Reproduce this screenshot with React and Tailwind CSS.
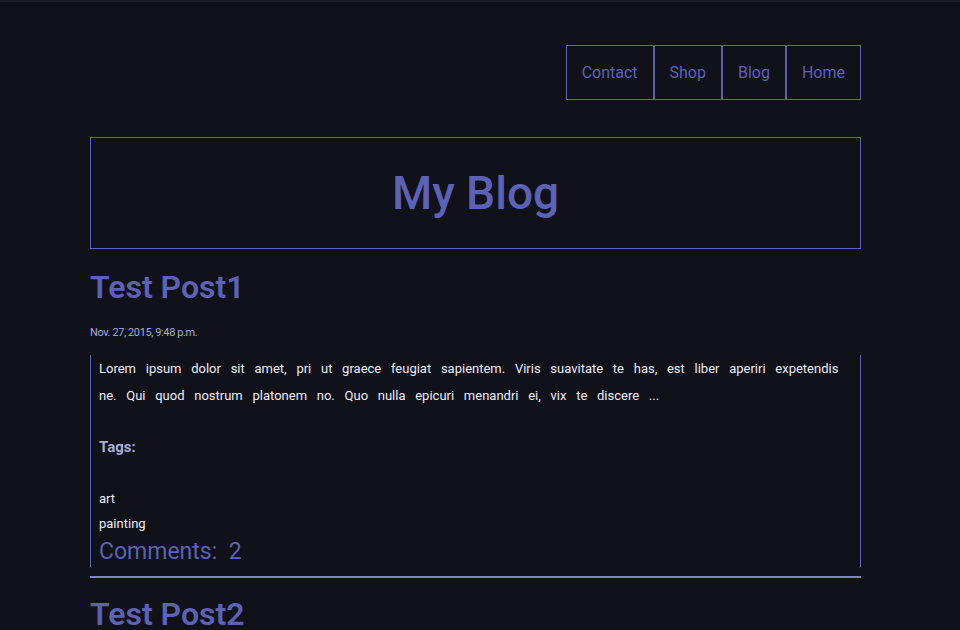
import React from 'react';

const navItems = ['Contact', 'Shop', 'Blog', 'Home'];

const posts = [
    {
        title: 'Test Post1',
        date: 'Nov. 27, 2015, 9:48 p.m.',
        body: 'Lorem ipsum dolor sit amet, pri ut graece feugiat sapientem. Viris suavitate te has, est liber aperiri expetendis ne. Qui quod nostrum platonem no. Quo nulla epicuri menandri ei, vix te discere ...',
        tags: ['art', 'painting'],
        comments: 2,
    },
];

const App = () => {
    return (
        <div
            className="min-h-screen h-[630px] overflow-hidden bg-[#11111a] border-t-2 border-[#1c1c25]"
            style={{ fontFamily: 'Roboto, "Liberation Sans", sans-serif' }}
        >
            <div className="ml-[90px] w-[771px]">
                <nav className="flex justify-end pt-[43px]">
                    {navItems.map((item) => (
                        <a
                            key={item}
                            href="#"
                            className="h-[55px] flex items-center px-[15px] border border-[#5c62b5] text-[16px] text-[#5c62b5]"
                        >
                            {item}
                        </a>
                    ))}
                </nav>

                <header className="mt-[37px] h-[112px] border border-[#5c62b5] flex items-center justify-center">
                    <h1 className="text-[46px] font-medium text-[#5c62b5]">My Blog</h1>
                </header>

                {posts.map((post) => (
                    <article key={post.title}>
                        <h2 className="mt-[18px] text-[32px] leading-[40px] font-semibold text-[#5c62b5]">
                            {post.title}
                        </h2>
                        <p className="mt-[19px] text-[11px] leading-[14px] tracking-[-0.4px] text-[#a4a8e4]">
                            {post.date}
                        </p>
                        <div className="mt-[15px] border-l border-r border-[#5c62b5] pl-2 pr-[12px] pb-[1px]">
                            <p className="text-[13px] leading-[27px] text-[#ececf6] [word-spacing:6.5px]">
                                {post.body}
                            </p>
                            <h4 className="mt-[28px] text-[15px] leading-[20px] font-bold text-[#a9acd8]">Tags:</h4>
                            <ul className="mt-[29px]">
                                {post.tags.map((tag) => (
                                    <li key={tag} className="text-[13px] leading-[25px] text-[#ececf6]">
                                        {tag}
                                    </li>
                                ))}
                            </ul>
                            <p className="pt-[2px] text-[23px] leading-[28px] text-[#5c62b5]">
                                Comments:&nbsp; {post.comments}
                            </p>
                        </div>
                        <hr className="mt-[9px] h-[2px] border-0 bg-[#7e82d2]" />
                    </article>
                ))}

                <h2 className="mt-[16px] text-[32px] leading-[40px] font-semibold text-[#5c62b5]">Test Post2</h2>
            </div>
        </div>
    );
};

export default App;
